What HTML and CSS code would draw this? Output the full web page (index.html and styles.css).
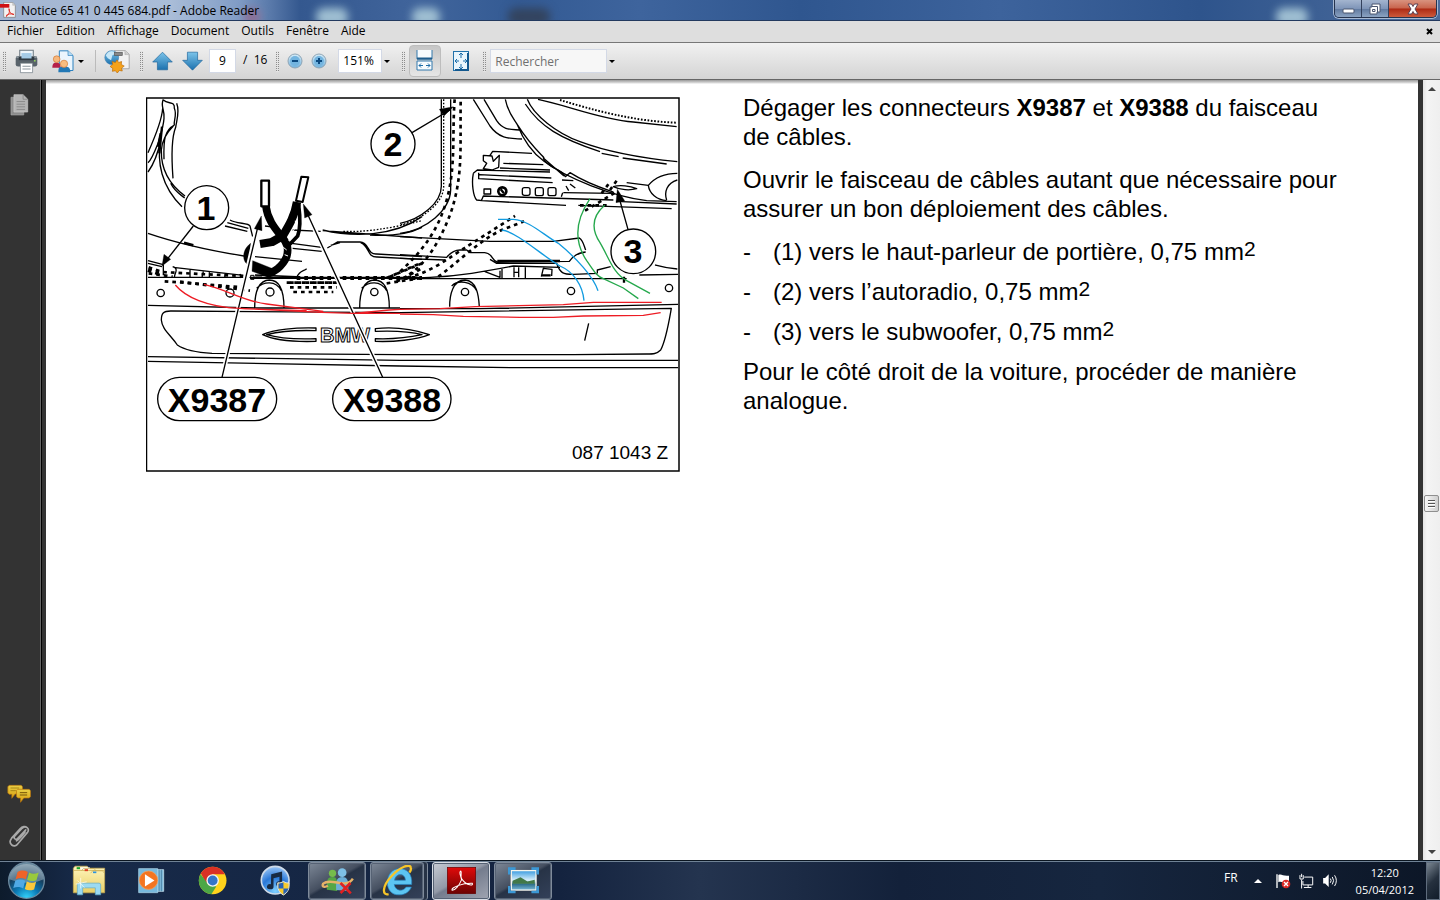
FILE: index.html
```html
<!DOCTYPE html>
<html lang="fr">
<head>
<meta charset="utf-8">
<title>Notice 65 41 0 445 684.pdf - Adobe Reader</title>
<link rel="stylesheet" href="styles.css">
</head>
<body>
<svg class="defs" aria-hidden="true">
  <defs>
    <linearGradient id="blue" x2="0" y2="1"><stop offset="0" stop-color="#7cc4ea"/><stop offset="1" stop-color="#1c71ae"/></linearGradient>
    <linearGradient id="pale" x2="0" y2="1"><stop offset="0" stop-color="#d8edf8"/><stop offset="1" stop-color="#6fb0dc"/></linearGradient>
    <linearGradient id="red" x2="0" y2="1"><stop offset="0" stop-color="#e00a0a"/><stop offset="1" stop-color="#6c0202"/></linearGradient>
    <linearGradient id="folder" x2="0" y2="1"><stop offset="0" stop-color="#fff6bd"/><stop offset="1" stop-color="#e9cf66"/></linearGradient>
    <linearGradient id="yellow" x2="0" y2="1"><stop offset="0" stop-color="#e9cf45"/><stop offset="1" stop-color="#d9a010"/></linearGradient>
    <radialGradient id="orb" cx=".5" cy="1" r="1"><stop offset="0" stop-color="#35d8ff"/><stop offset=".35" stop-color="#0a78b4"/><stop offset=".65" stop-color="#17405f"/><stop offset="1" stop-color="#6f8fa3"/></radialGradient>
    <radialGradient id="disc" cx=".5" cy=".9" r="1"><stop offset="0" stop-color="#7fd0ff"/><stop offset=".5" stop-color="#2a78d8"/><stop offset="1" stop-color="#b9dcff"/></radialGradient>
    <linearGradient id="sky" x2="0" y2="1"><stop offset="0" stop-color="#3a9be0"/><stop offset=".5" stop-color="#d9f0fa"/><stop offset=".7" stop-color="#2f6f8c"/><stop offset="1" stop-color="#7ab9d8"/></linearGradient>
  </defs>
</svg>

<header class="titlebar">
  <i class="haze haze-a"></i><i class="haze haze-b"></i><i class="haze haze-c"></i><i class="haze haze-d"></i><i class="haze haze-e"></i>
  <svg class="app-icon" viewBox="0 9 48 48" width="16" height="16"><path d="M11 10H38L46 19V55H11Z" fill="#f4f2f2" stroke="#777" stroke-width="2"/><path d="M38 10V19H46" fill="#ccc" stroke="#999"/><path d="M0 15H28V26H0Z" fill="#d00f14"/><path d="M27 29C30 40 27 46 18 53M27 29C27 39 32 45 42 46M18 50C25 44 32 43 42 47" fill="none" stroke="#e0342c" stroke-width="3"/></svg>
  <h1>Notice 65 41 0 445 684.pdf - Adobe Reader</h1>
  <div class="winbuttons">
    <button aria-label="Réduire"><svg viewBox="0 0 14 12" width="14" height="12"><rect x="2" y="6" width="11" height="4" rx="1" fill="#fff" stroke="#4b5670"/></svg></button>
    <button aria-label="Restaurer"><svg viewBox="0 0 14 12" width="14" height="12"><path d="M4 1H12V9H9V11H2V4H4Z" fill="#fff" stroke="#4b5670"/><path d="M4 3.5H9.500V9M4.500 6.500H7V8.500H4.500Z" fill="none" stroke="#4b5670"/></svg></button>
    <button class="close" aria-label="Fermer"><svg viewBox="0 0 14 12" width="14" height="12"><path d="M2 1H5.500L7 3.500 8.500 1H12L9 6 12 11H8.500L7 8.500 5.500 11H2L5 6Z" fill="#fff" stroke="#5b4356"/></svg></button>
  </div>
</header>

<nav class="menubar">
  <button>Fichier</button><button>Edition</button><button>Affichage</button><button>Document</button><button>Outils</button><button>Fenêtre</button><button>Aide</button>
  <button class="doc-close" aria-label="Fermer le document"><svg viewBox="0 0 7 7" width="7" height="7"><path d="M1 1L6 6M6 1L1 6" stroke="#000" stroke-width="2"/></svg></button>
</nav>

<div class="toolbar">
  <div class="group file">
    <i class="grip"></i>
    <button class="tool" aria-label="Imprimer"><svg viewBox="46 146 68 74" width="23" height="25"><path d="M60 150H100V172H60Z" fill="#eef5fa" stroke="#6b7780" stroke-width="3"/><rect x="48" y="167" width="64" height="31" rx="7" fill="#59636b"/><path d="M50 170H110" stroke="#9aa5ac" stroke-width="4"/><rect x="57" y="169" width="46" height="10" fill="#303a42"/><rect x="65" y="158" width="30" height="16" fill="#a5cbe6"/><path d="M62 188H98V216H62Z" fill="#fff" stroke="#6b7780" stroke-width="2"/><path d="M68 197H92M68 205H92" stroke="#8d989f" stroke-width="3"/><path d="M102 181h5" stroke="#9be35b" stroke-width="4"/></svg></button>
    <div class="combo share"><button class="tool" aria-label="Partager"><svg viewBox="152 144 72 74" width="24" height="25"><path d="M177 149H203L218 163V208H177Z" fill="#eaf5fd" stroke="#2d82c0" stroke-width="3"/><path d="M203 149V163H218" fill="#b5dbf3" stroke="#2d82c0" stroke-width="2"/><path d="M156 200C156 186 162 184 168 184S181 186 181 200Z" fill="#b52049"/><circle cx="169" cy="174" r="10" fill="#f6b77c" stroke="#d1762f" stroke-width="2"/><path d="M174 213C174 197 181 196 191 196S210 197 210 213Z" fill="#2278b5"/><circle cx="191" cy="188" r="11" fill="#f9bd7f" stroke="#d1762f" stroke-width="2"/></svg></button><button class="caret" aria-label="Options de partage"></button></div>
    <i class="sep"></i>
    <button class="tool" aria-label="Acrobat.com"><svg viewBox="308 144 84 76" width="28" height="25"><path d="M342 149H375L387 160V204H342Z" fill="#f2f2f2" stroke="#888" stroke-width="2"/><path d="M374 150V161H386" fill="#ccc" stroke="#888"/><circle cx="334" cy="170" r="21" fill="url(#blue)" stroke="#3e81b3" stroke-width="2"/><path d="M316 164C322 149 340 147 348 158L336 163 332 178 322 172Z" fill="#c8e7f7"/><rect x="342" y="154" width="24" height="10" fill="#888" stroke="#555" stroke-width="2"/><path d="M350 177L355 185 364 182 363 191 372 196 364 202 366 211 357 209 351 217 345 210 336 212 337 203 329 197 337 191 335 182 345 185Z" fill="#f5a21b" stroke="#b86a08" stroke-width="2"/></svg></button>
  </div>
  <div class="group pages">
    <i class="grip"></i>
    <button class="tool mid" aria-label="Page précédente"><svg viewBox="454 154 62 58" width="21" height="20"><path d="M485 157L514 186H500V209H470V186H456Z" fill="url(#blue)" stroke="#1d659b" stroke-width="2"/></svg></button>
    <button class="tool mid" aria-label="Page suivante"><svg viewBox="544 156 62 58" width="21" height="20"><path d="M575 212L604 183H590V159H560V183H546Z" fill="url(#blue)" stroke="#1d659b" stroke-width="2"/></svg></button>
    <input class="box page-no" id="page-no" value="9" aria-label="Page"><label for="page-no">/&nbsp; 16</label>
  </div>
  <div class="group zoom">
    <i class="grip"></i>
    <button class="tool small" aria-label="Zoom arrière"><svg viewBox="0 0 16 16" width="16" height="16"><circle cx="8" cy="8" r="7" fill="url(#pale)" stroke="#8fa5b5"/><circle cx="8" cy="8" r="5" fill="#73b4df"/><path d="M5 8H11" stroke="#0c4a80" stroke-width="2"/></svg></button>
    <button class="tool small" aria-label="Zoom avant"><svg viewBox="0 0 16 16" width="16" height="16"><circle cx="8" cy="8" r="7" fill="url(#pale)" stroke="#8fa5b5"/><circle cx="8" cy="8" r="5" fill="#73b4df"/><path d="M5 8H11M8 5V11" stroke="#0c4a80" stroke-width="2"/></svg></button>
    <div class="combo"><input class="box zoom-level" value="151%" aria-label="Zoom"><button class="caret" aria-label="Niveaux de zoom"></button></div>
  </div>
  <div class="group view">
    <i class="grip"></i>
    <button class="tool wide active" aria-label="Pleine largeur"><svg viewBox="0 0 18 22" width="18" height="22"><path d="M1 0V9H16V0" fill="#f7fbfe" stroke="#3278ac"/><path d="M1 8.500H16" stroke="#1d5c8d" stroke-width="2"/><path d="M1 20V11H16V20Z" fill="#f7fbfe" stroke="#3278ac"/><path d="M3 15.500H7M10 15.500H14M5 13.500L3 15.500 5 17.500M12 13.500L14 15.500 12 17.500" fill="none" stroke="#1c6ca8"/></svg></button>
    <button class="tool wide" aria-label="Page entière"><svg viewBox="0 0 16 21" width="16" height="21"><rect x=".5" y=".5" width="15" height="19" fill="#e9f5fc" stroke="#2271aa"/><path d="M15 2V19H2" fill="none" stroke="#14598f" stroke-width="2"/><path d="M8 2V7M8 13V18M2 10H6M10 10H14M6 4L8 2 10 4M6 16L8 18 10 16M4 8L2 10 4 12M12 8L14 10 12 12" fill="none" stroke="#1c6ca8"/></svg></button>
  </div>
  <div class="group find">
    <i class="grip"></i>
    <div class="combo"><input class="box search" placeholder="Rechercher" aria-label="Rechercher"><button class="caret" aria-label="Options de recherche"></button></div>
  </div>
</div>

<main class="workspace">
  <aside class="side">
    <button aria-label="Pages"><svg viewBox="28 280 58 68" width="19" height="23"><path d="M31 292H70V346H31Z" fill="#8c8c8c" stroke="#aaa" stroke-width="2"/><path d="M40 284H68L82 298V337H40Z" fill="#b4b4b4" stroke="#ccc" stroke-width="2"/><path d="M68 284V298H82M48 305H74M48 313H74M48 321H74M48 329H74" fill="none" stroke="#777" stroke-width="2"/></svg></button>
    <span class="spring"></span>
    <button aria-label="Commentaires"><svg viewBox="22 42 74 60" width="25" height="20"><path d="M28 46H64L68 50V72H46L36 85V73H28L24 69V50Z" fill="url(#yellow)" stroke="#b8720c" stroke-width="2"/><path d="M32 54H58M32 62H48" stroke="#8b6a0c" stroke-width="2"/><path d="M54 58H88L92 62V80L88 84H72L62 97V84H54L50 80V62Z" fill="url(#yellow)" stroke="#b8720c" stroke-width="2"/><path d="M60 68H82M60 75H82" stroke="#775608" stroke-width="3"/></svg></button>
    <button aria-label="Pièces jointes"><svg viewBox="22 160 70 76" width="23" height="25"><path d="M76 178L51 204C45 210 37 203 43 196L65 173C77 162 90 175 80 187L52 220C41 236 20 220 33 203L58 175C66 166 75 166 80 171M48 211C59 204 67 193 74 184" fill="none" stroke="#a9a9a9" stroke-width="5" stroke-linecap="round"/></svg></button>
  </aside>
  <article class="page">
    <svg class="figure" viewBox="146 97 534 375" width="534" height="375" role="img" aria-label="Schéma de câblage">
      <rect x="146.500" y="98" width="532.500" height="373" fill="#fff" stroke="#000" stroke-width="1.500"/>
      <g class="ink" transform="translate(140 90) scale(.33333)">
        <path d="M70 28C60 48 75 60 72 85C70 112 62 130 56 155C48 175 35 210 24 218M68 55C66 90 50 130 24 188M62 150C54 190 40 224 24 246M70 30C85 44 105 32 103 55C112 75 100 94 103 105C75 120 70 145 72 208M110 40C120 65 110 90 107 112C94 145 94 200 99 265M100 108C78 130 66 150 64 180C63 215 70 270 135 318M62 150C50 215 64 290 126 350M92 280C104 305 120 312 134 324"/>
        <path d="M62 130L54 170M66 110L58 190" stroke-width="7"/>
        <path d="M270 390C290 402 326 398 330 408L338 440M262 398L325 415M255 408L322 424M24 430C100 456 200 480 312 498M345 500L486 514M375 408L408 412M458 420L542 424M548 420C640 442 760 440 846 380M548 422L846 444M690 435C770 440 820 425 846 412M455 460L545 472M458 475L545 484M562 474L592 456H660C690 458 680 494 710 492L846 500M572 466L600 458M662 458C690 470 680 502 712 501L846 508"/>
        <path d="M132 458L160 466" stroke-width="8"/>
        <path d="M24 512L70 524M24 520L66 530M70 524V556M98 530C120 536 100 555 104 562M100 532L310 556M150 540V562M190 545L186 562M208 546V562M256 550L254 563M300 552L304 564M24 562H846M470 562C480 540 490 545 500 536M345 555L470 560"/>
        <path d="M330 564H846" stroke-width="6"/>
        <path class="dash heavy" d="M26 532L66 546L180 552 310 558M26 550L98 560M450 578H590M740 564L840 520M770 575L846 535M74 574L310 592"/>
        <path class="dash" d="M470 564H846M24 540L60 552" stroke-width="12"/>
        <path class="stitch" d="M610 424C700 428 790 405 846 392"/>
        <path class="halo" d="M318 580L352 424M600 580L520 408"/>
        <path d="M378 350C382 385 402 412 425 440C442 460 447 475 440 500C428 530 400 548 378 554" stroke-width="23"/>
        <path d="M471 336C464 380 446 408 428 438L396 456 360 462" stroke-width="25"/>
        <path d="M476 345C482 390 480 420 473 438L448 464" stroke-width="11"/>
        <path class="fill" d="M332 460C302 482 308 520 326 524L330 490ZM338 512L336 544 380 560 408 540Z"/>
        <path d="M466 392C470 415 452 435 446 452M430 472L440 480M434 494L444 498" style="stroke:#fff" stroke-width="3"/>
        <path d="M332 556H342V568H332ZM346 558H366" stroke-width="3"/>
        <path d="M364 272H387V349H364Z" fill="#fff" stroke-width="7"/><path d="M484 260L505 262 488 336 468 332Z" fill="#fff" stroke-width="6"/>
        <circle cx="200" cy="353" r="66" fill="#fff"/><circle cx="759" cy="162" r="66" fill="#fff"/>
        <path d="M160 408L72 520"/><path class="fill" d="M66 528L72 493 92 508Z"/>
      </g>
      <g class="ink" transform="translate(400 90) scale(.33333)">
        <path d="M124 28V285C126 340 60 388 0 400M152 28V300C150 360 80 420 0 430M220 28L270 108C300 150 335 145 366 147M252 28L290 92C310 122 335 118 358 120M316 28C324 70 345 90 352 104C374 160 400 190 432 214C500 265 640 320 740 332L830 335M352 104C400 180 440 205 430 204L492 258M382 28C400 75 470 130 540 155C620 185 730 205 832 215M376 42C420 110 480 145 600 185M605 190L656 200M668 204L800 222M414 28C500 45 600 88 700 96L830 110"/>
        <path d="M270 196L278 184 396 190M250 196L276 198 280 214 298 196 296 232 276 240 250 236 260 220 250 212ZM310 220L430 224M300 234L450 240M220 250L232 240 450 246M220 250C214 280 220 320 230 330L246 332M236 248V266L458 278M238 254L454 264M244 332L250 318 640 330M246 332L498 346M648 334L830 342M535 346L815 356M430 206C450 240 480 230 496 260L510 248C560 280 610 296 640 306M490 308L640 310M486 270L520 272M498 288L506 302M510 282L526 294M488 308L484 320"/>
        <path d="M252 297H272V312H252Z"/><circle cx="307" cy="304" r="12" stroke-width="8"/><path d="M302 298L312 310" stroke-width="7"/>
        <rect x="367" y="293" width="23" height="23" rx="6"/><rect x="406" y="293" width="24" height="24" rx="6"/><rect x="444" y="293" width="24" height="24" rx="6"/>
        <path d="M680 278L745 286C770 256 800 250 832 250M745 286C748 310 770 330 800 332M832 270C800 280 792 306 800 330M640 290C660 284 690 288 710 296C690 302 660 300 640 290Z"/>
        <path d="M0 440L270 454H460L538 444C550 452 552 468 557 480M0 494L140 502C150 490 160 480 180 480H200L212 488H254C280 490 274 512 292 516L508 514C520 496 540 488 557 486M0 505L136 510M270 508L290 520H470C480 550 490 553 520 553L592 550M0 566L90 562C180 558 250 545 340 528L480 532M0 566H680M255 545L300 562V542M306 535V565M342 532V562M356 532V562M342 547H356M376 528V565M424 560L430 535L456 538 455 558M592 550V540L632 530M765 525C790 532 800 535 832 537M718 555L834 553"/>
        <path d="M672 560V578M426 556H452M292 513H480" stroke-width="7"/>
        <path class="stitch" d="M131 28V290C130 342 60 392 0 405"/><path class="stitch" d="M480 30C580 60 700 94 830 98" stroke-width="6"/>
        <path class="dash heavy" d="M164 28C156 130 168 230 140 330C115 420 70 480 0 545M182 35C180 180 190 260 150 375C120 450 80 530 0 570M0 565C80 560 150 500 200 470L345 378M115 560C170 520 240 450 305 420L372 394M540 346H620M555 362L650 305M605 310L630 276M630 300L650 272"/>
        <path d="M36 128L150 60M684 418L655 315"/><path class="fill" d="M160 50L118 58 132 78ZM652 298L648 338 674 332Z"/>
        <circle cx="700" cy="484" r="67" fill="#fff"/>
      </g>
      <g class="ink" transform="translate(140 270) scale(.33333)">
        <circle cx="62" cy="69" r="11"/><circle cx="270" cy="69" r="12"/><circle cx="390" cy="66" r="12"/><circle cx="703" cy="66" r="11"/>
        <path d="M344 114C344 80 350 32 388 30C426 30 432 80 432 114M350 55C370 34 408 30 424 62M659 114C659 80 665 32 703 30C742 30 748 80 748 114M665 55C685 34 722 30 740 62M24 106L350 114H780M64 150C64 130 70 123 92 123L780 128M64 150C66 178 92 195 112 225C140 244 180 248 216 250L780 254M24 260L780 271M24 274L780 288"/>
        <path d="M368 194C400 178 470 172 528 174V182C470 180 420 184 380 194C420 206 470 208 528 206V214C460 216 400 210 368 194ZM706 176C760 170 820 178 868 194C830 210 760 216 706 214V206C760 208 810 202 846 194C810 184 760 182 706 184Z"/>
        <path class="dash heavy" d="M120 35L330 62M440 38H600M450 52H590M460 66H580M740 40L846 24M750 20L846 -20"/>
      </g>
      <text class="outline" x="320" y="342">BMW</text>
      <g class="ink" transform="translate(400 270) scale(.33333)">
        <circle cx="195" cy="66" r="11"/><circle cx="513" cy="63" r="11"/><circle cx="807" cy="54" r="11"/>
        <path d="M149 110C149 75 158 30 195 30C230 32 236 75 238 110M155 48C175 28 216 34 230 62M0 116H240L834 103M0 128L240 124 814 115C806 160 798 210 782 240C770 252 760 252 740 252L520 254H0M566 160L554 212M0 271H834M0 288L350 293H834"/>
      </g>
      <g class="ink" transform="translate(140 90) scale(.33333)">
        <path class="halo" d="M250 845L350 418M720 845L512 392"/>
        <path d="M246 862L356 400M728 862L496 358"/><path class="fill" d="M364 378L343 416 366 422ZM490 342L494 384 516 374Z"/>
        <rect x="53" y="862" width="357" height="130" rx="65"/><rect x="578" y="862" width="355" height="130" rx="65"/>
      </g>
      <g class="red" transform="translate(400 270) scale(.33333)"><path d="M0 118L120 116 226 110 490 104 580 97H785M0 132L100 134 190 139 360 142H460L550 138 730 136 782 128"/></g>
      <g class="red" transform="translate(140 270) scale(.33333)"><path d="M106 45C135 80 200 112 300 115L545 127 640 130H780M192 43C260 58 310 94 380 102L550 124M640 130L748 120 780 118M300 116L500 122"/></g>
      <g transform="translate(400 90) scale(.33333)" fill="none" stroke-width="4"><path stroke="#129be0" d="M294 388H340C390 392 430 435 475 460C530 505 580 560 594 602M305 420C350 425 430 500 480 528C520 545 548 585 552 632"/><path stroke="#25a84c" d="M570 326C520 400 525 460 560 512C580 540 590 560 610 566L670 594 715 626M614 346C575 380 575 420 600 458C630 510 640 550 680 572L750 610"/></g>
      <g class="callout" text-anchor="middle"><text x="206" y="220">1</text><text x="393" y="156">2</text><text x="633" y="263">3</text><text x="217" y="412">X9387</text><text x="392" y="412">X9388</text></g>
      <text class="fig-no" x="572" y="459">087 1043 Z</text>
    </svg>
    <section class="copy">
      <p>Dégager les connecteurs <b>X9387</b> et <b>X9388</b> du faisceau<br>de câbles.</p>
      <p>Ouvrir le faisceau de câbles autant que nécessaire pour<br>assurer un bon déploiement des câbles.</p>
      <ul>
        <li>(1) vers le haut-parleur de portière, 0,75 mm<sup>2</sup></li>
        <li>(2) vers l’autoradio, 0,75 mm<sup>2</sup></li>
        <li>(3) vers le subwoofer, 0,75 mm<sup>2</sup></li>
      </ul>
      <p>Pour le côté droit de la voiture, procéder de manière<br>analogue.</p>
    </section>
  </article>
  <div class="scrollbar">
    <button aria-label="Défiler vers le haut"><i class="tri up"></i></button>
    <span class="track-top"></span><button class="thumb" aria-label="Position"><i></i><i></i><i></i></button><span class="track-bottom"></span>
    <button aria-label="Défiler vers le bas"><i class="tri"></i></button>
  </div>
</main>

<footer class="taskbar">
  <button class="start" aria-label="Démarrer"><svg viewBox="22 274 118 112" width="39" height="37"><circle cx="81" cy="330" r="54" fill="url(#orb)" stroke="#6d8ba0" stroke-width="4"/><path d="M29 326C32 265 130 265 133 326C100 342 62 338 29 326Z" fill="#fff" opacity=".3"/><path d="M54 304C66 298 75 299 85 304L79 326C69 321 60 321 48 326Z" fill="#ef6328"/><path d="M89 306C98 311 107 311 118 306L111 329C101 333 92 333 83 328Z" fill="#99c93c"/><path d="M47 331C57 326 67 326 77 331L71 354C61 348 52 348 41 353Z" fill="#4fa9e5"/><path d="M82 333C92 338 101 338 110 334L104 357C93 361 84 361 76 356Z" fill="#fac83b"/></svg></button>
  <button class="pin" aria-label="Explorateur"><svg viewBox="216 288 102 92" width="34" height="31"><path d="M220 297L225 291H262L266 297H314V371H220Z" fill="url(#folder)" stroke="#c7a94d" stroke-width="2"/><path d="M230 294H240V300H230Z" fill="#18a52b"/><path d="M242 295H270V301H242Z" fill="#fff"/><path d="M220 304H314M245 304L250 298H282L288 305M272 312L278 305H308L313 312" fill="none" stroke="#c7a94d" stroke-width="2"/><path d="M254 300H264V306H254Z" fill="#dd3e22"/><path d="M279 307H289V312H279Z" fill="#2a93df"/><path d="M232 377V346Q232 342 237 342H297Q302 342 302 347V377H286V356H248V377Z" fill="#9bdaf2" stroke="#5ba9ce" stroke-width="2"/><path d="M242 326V358M227 345L260 338M232 334L253 355" stroke="#fff" stroke-width="2"/></svg></button>
  <button class="pin" aria-label="Lecteur multimédia"><svg viewBox="408 292 86 82" width="29" height="27"><path d="M464 300H488V366H464Z" fill="#81bada" stroke="#d8f0fb" stroke-width="2"/><path d="M474 300V366M481 300V366" stroke="#336d91" stroke-width="2"/><path d="M412 297H470V370H412Z" fill="#78b9dc" stroke="#b7dff1" stroke-width="2"/><circle cx="442" cy="332" r="28" fill="#f37521" stroke="#f9a35c" stroke-width="2"/><path d="M431 314L460 333 431 351Z" fill="#fff"/></svg></button>
  <button class="pin" aria-label="Chrome"><svg viewBox="595 286 90 88" width="30" height="29"><circle cx="639" cy="330" r="42" fill="#ffd31c"/><path d="M603 308A42 42 0 0 1 676 311H639L620 340Z" fill="#da3125"/><path d="M602 310L624 340 650 348 635 372A42 42 0 0 1 602 310Z" fill="#4ca746"/><circle cx="639" cy="330" r="19" fill="#f5f5f5"/><circle cx="639" cy="330" r="15" fill="#3475c8"/></svg></button>
  <button class="pin" aria-label="iTunes"><svg viewBox="778 284 94 94" width="31" height="31"><circle cx="824" cy="330" r="42" fill="url(#disc)" stroke="#cfdbe8" stroke-width="5"/><path d="M812 312L845 304V340A9 8 0 1 1 837 333V320L819 324V350A10 8 0 1 1 811 342Z" fill="#182a43"/><path d="M849 334C856 338 862 339 866 338C868 356 862 368 849 375C836 368 830 356 832 338C838 339 844 337 849 334Z" fill="#f8cb2c" stroke="#dbe5ef" stroke-width="3"/><path d="M849 337V355H834V341ZM849 355H864C862 364 856 369 849 373Z" fill="#2762b7"/></svg></button>
  <button class="task" aria-label="Messenger"><svg viewBox="92 82 98 84" width="33" height="28"><circle cx="126" cy="101" r="11" fill="#76bd4b"/><path d="M109 150C107 120 112 112 126 112S141 120 140 154Z" fill="#55a645"/><circle cx="155" cy="99" r="13" fill="#7ec0e6"/><path d="M137 151C135 122 140 112 155 112S175 120 173 154Z" fill="#6caed7"/><path d="M187 117C168 150 122 112 98 132C92 142 104 144 112 138" fill="none" stroke="#e5b368" stroke-width="7"/><path d="M150 130L181 161M180 130L150 160" stroke="#df2021" stroke-width="8"/></svg></button>
  <button class="task stacked" aria-label="Internet Explorer"><svg viewBox="270 70 94 94" width="31" height="31"><path d="M343 137C336 151 310 150 307 129H360C363 95 343 80 321 81C279 83 273 153 314 160C336 163 352 154 359 137ZM308 116C311 94 340 93 341 116Z" fill="#5cc5f2" stroke="#2681bf" stroke-width="2"/><path d="M290 158C270 164 270 135 298 105C325 74 355 66 357 77C359 82 357 88 353 93" fill="none" stroke="#f7c529" stroke-width="7"/></svg></button>
  <button class="task current" aria-label="Adobe Reader"><svg viewBox="470 74 86 80" width="29" height="27"><rect x="471" y="75" width="84" height="78" fill="url(#red)" stroke="#650000" stroke-width="2"/><path d="M511 86C503 90 513 104 513 112C507 127 494 144 485 143C480 135 516 121 545 122C550 130 530 131 514 110C508 99 515 91 511 86Z" fill="none" stroke="#fff" stroke-width="3"/></svg></button>
  <button class="task" aria-label="Image"><svg viewBox="652 76 94 80" width="31" height="27"><rect x="662" y="86" width="75" height="59" fill="url(#sky)" stroke="#f5f5ee" stroke-width="4"/><path d="M666 117L690 106 711 119 733 114V126H666Z" fill="#427847"/><path d="M656 98V80H675M723 80H742V98M656 133V151H675M723 151H742V133" fill="none" stroke="#3c98d5" stroke-width="8"/></svg></button>
  <div class="tray">
    <span class="lang">FR</span>
    <button aria-label="Icônes cachées"><i class="tri up light"></i></button>
    <svg viewBox="222 98 48 48" width="16" height="16"><path d="M228 102V143" stroke="#fff" stroke-width="4"/><path d="M232 104C242 99 246 109 264 106V128C247 131 242 121 232 126Z" fill="#fff"/><circle cx="255" cy="131" r="13" fill="#dc2925"/><path d="M249 125L261 137M261 125L249 137" stroke="#fff" stroke-width="4"/></svg>
    <svg viewBox="296 98 46 48" width="15" height="16"><path d="M312 110H338V134H308V122M324 134V141M311 142H334M304 118V145M299 104V116H309V104M304 100V110" fill="none" stroke="#fff" stroke-width="3"/></svg>
    <svg viewBox="366 100 48 46" width="16" height="15"><path d="M369 115H375L386 104V143L375 132H369Z" fill="#fff"/><path d="M391 117Q396 123 391 130M397 112Q405 123 397 135M404 107Q415 123 404 140" fill="none" stroke="#fff" stroke-width="3"/></svg>
    <time>12:20<br>05/04/2012</time>
    <button class="desktop" aria-label="Afficher le Bureau"></button>
  </div>
</footer>
</body>
</html>
```
FILE: styles.css
```css
* { box-sizing: border-box; }
html, body { height: 100%; margin: 0; }
body { display: flex; flex-direction: column; overflow: hidden; background: #333; color: #000; font: 12px/16px "Open Sans", "Noto Sans", sans-serif; }
button { display: flex; align-items: center; justify-content: center; margin: 0; padding: 0; border: 0; background: none; color: inherit; font: inherit; }
svg { display: block; flex: none; }
.defs { position: absolute; width: 0; height: 0; }

.titlebar { position: relative; display: flex; align-items: center; flex: none; height: 21px; overflow: hidden; border-bottom: 1px solid #23395f; background: linear-gradient(90deg, #a3b5d1 0, #aabdd8 170px, #7f9bc5 240px, #34588f 300px, #41659c 420px, #335a93 520px, #3e649d 640px, #2f568f 800px, #3d639c 1000px, #2e548c 1200px, #4c6c9c 100%); }
.titlebar h1 { position: relative; margin: 0 0 0 5px; padding-top: 2px; font-size: 12px; font-weight: 400; line-height: 18px; }
.app-icon { position: relative; }
.haze { position: absolute; top: 8px; height: 18px; width: 32px; border-radius: 8px; background: #9fbfd2; filter: blur(4px); }
.haze-a { left: 316px; }
.haze-b { left: 412px; width: 28px; }
.haze-c { left: 508px; width: 42px; background: #33445f; }
.haze-d { left: 1276px; }
.haze-e { left: 244px; width: 16px; background: #8d6f95; }
.winbuttons { position: relative; display: flex; align-self: flex-start; height: 18px; margin: 0 3px 0 auto; border: 1px solid #26344f; border-top: 0; border-radius: 0 0 5px 5px; overflow: hidden; box-shadow: 0 0 0 1px #a7b9d3; }
.winbuttons button { width: 27px; border-right: 1px solid #33415d; background: linear-gradient(#a4b5cf, #7f95b8 50%, #60799f 52%, #8ba3c2); }
.winbuttons .close { width: 47px; border: 0; background: linear-gradient(#d9937f, #c8644c 48%, #ad2a14 52%, #cd5a3c); }

.menubar { display: flex; align-items: center; flex: none; gap: 12px; height: 22px; padding: 0 7px 1px; border-bottom: 1px solid #777; background: #dedede; }
.menubar .doc-close { margin-left: auto; }

.toolbar { display: flex; align-items: center; flex: none; height: 37px; border-bottom: 1px solid #666; background: linear-gradient(#f1f1f1, #d4d4d4); }
.group { display: flex; align-items: center; gap: 4px; }
.grip { width: 3px; height: 21px; background: repeating-linear-gradient(#e4e4e4 0 1px, transparent 1px 2px), repeating-linear-gradient(90deg, #8c8c8c 0 1px, transparent 1px 2px); }
.sep { width: 1px; height: 22px; margin: 0 3px 0 6px; background: #bbb; }
.tool { width: 28px; height: 32px; }
.tool.mid { width: 26px; }
.tool.small { width: 20px; }
.tool.wide { width: 32px; }
.tool.active { border: 1px solid #bdbdbd; border-radius: 4px; background: linear-gradient(#c6c6c6, #e6e6e6); }
.file { padding-left: 3px; }
.file .grip { margin-right: 2px; }
.share { margin-left: 5px; }
.pages { padding-left: 9px; }
.pages .grip, .zoom .grip { margin-right: 2px; }
.pages label { padding: 0 0 2px 3px; }
.zoom { padding-left: 9px; }
.zoom .combo { margin-left: 5px; }
.view { padding-left: 10px; }
.find { padding-left: 6px; }
.combo { display: flex; align-items: center; }
.caret { width: 10px; height: 24px; }
.share .caret { width: 8px; }
.caret::before { content: ""; border: 3px solid transparent; border-top-color: #000; border-bottom: 0; }
.box { height: 24px; margin: 0; padding: 0 4px 2px; border: 1px solid #d3d9e6; border-radius: 0; background: #fff; color: #000; font: inherit; }
.page-no { width: 27px; text-align: center; }
.zoom-level { width: 44px; }
.search { width: 117px; padding-bottom: 0; background: #f7f7f7; }
.search::placeholder { color: #707070; opacity: 1; }

.workspace { display: flex; flex: 1; min-height: 0; background: #333; }
.side { display: flex; flex-direction: column; align-items: center; gap: 20px; flex: none; width: 42px; padding: 13px 3px 11px 0; border-right: 1px solid #000; box-shadow: inset -1px 0 #666; background: #333; }
.spring { flex: 1; }
.page { display: flex; align-items: flex-start; gap: 63px; flex: 1; min-width: 0; margin: 0 5px 0 4px; padding: 13px 80px 0 100px; background: linear-gradient(#999, #ddd 3px, #fff 4px); overflow: hidden; }
.figure { margin-top: 4px; }
.copy { flex: 1; font: 24px/29px "Liberation Sans", Arial, sans-serif; white-space: nowrap; }
.copy p { margin: 0 0 14px; }
.copy ul { margin: 0; padding: 0; list-style: none; }
.copy li { margin-bottom: 11px; }
.copy li::before { content: "-"; display: inline-block; width: 30px; }
.copy sup { font-size: 21px; line-height: 0; vertical-align: 4px; }

.ink { fill: none; stroke: #000; stroke-width: 4; stroke-linejoin: round; }
.ink .fill { fill: #000; stroke-width: 1; }
.ink .dash { stroke-dasharray: 11 12; }
.ink .heavy { stroke-width: 8; }
.ink .stitch { stroke-dasharray: 5 5; }
.ink .halo { stroke: #fff; stroke-width: 13; }
.red { fill: none; stroke: #ed1c24; stroke-width: 4; }
.callout { font: bold 34px "Liberation Sans", Arial, sans-serif; }
.outline { fill: #fff; stroke: #000; font: bold 20px "Liberation Sans", Arial, sans-serif; }
.fig-no { font: 19px "Liberation Sans", Arial, sans-serif; }

.scrollbar { display: flex; flex-direction: column; flex: none; width: 17px; background: linear-gradient(90deg, #e4e4e4, #f4f4f4 4px, #efefef); }
.scrollbar button { height: 17px; }
.scrollbar .thumb { flex-direction: column; gap: 1px; height: 17px; margin: 0 1px; border: 1px solid #8f8f8f; border-radius: 2px; background: linear-gradient(90deg, #f6f6f6, #cfcfcf); }
.thumb i { width: 7px; height: 2px; background: linear-gradient(#555 50%, #fff 50%); }
.track-top { flex: 398; }
.track-bottom { flex: 331; }
.tri { border: 4px solid transparent; border-top-color: #444; border-bottom: 0; }
.tri.up { border-top: 0; border-bottom: 4px solid #444; }
.tri.light { border-bottom-color: #fff; }

.taskbar { display: flex; align-items: center; flex: none; gap: 4px; height: 40px; padding-left: 7px; border-top: 1px solid #0b1621; box-shadow: inset 0 1px #6f8295; background: linear-gradient(90deg, #0d1b2c, #172a49 80px, #14233f 560px, #24344f 700px, #13213a 900px, #16263f 1100px, #0c1626); color: #fff; }
.pin { width: 58px; height: 38px; }
.start + .pin { margin-left: 10px; }
.task { width: 58px; height: 38px; border: 1px solid #7f8b9b; border-radius: 3px; background: linear-gradient(150deg, #7d8897, #454f60 45%, #273346 50%, #34415a); box-shadow: inset 0 0 0 1px #566274; }
.task.stacked { width: 54px; margin-right: 4px; box-shadow: inset 0 0 0 1px #566274, 3px 0 0 #273346, 4px 0 0 #7f8b9b; }
.task.current { border-color: #d8dde5; background: linear-gradient(150deg, #c7ccd5, #9299a7 45%, #747c8d 50%, #a0a5b2); }
.tray { display: flex; align-items: center; gap: 8px; height: 100%; margin-left: auto; }
.lang { margin: 0 8px 6px 0; }
.tray > button:not(.desktop) { margin-right: 5px; }
.tray time { margin-left: 10px; text-align: center; font-size: 11px; line-height: 17px; }
.tray .desktop { width: 14px; height: 38px; margin-left: 4px; border: 1px solid #5f6c7d; background: linear-gradient(135deg, #7b8793, #26313f 50%, #111c2a); }
```
